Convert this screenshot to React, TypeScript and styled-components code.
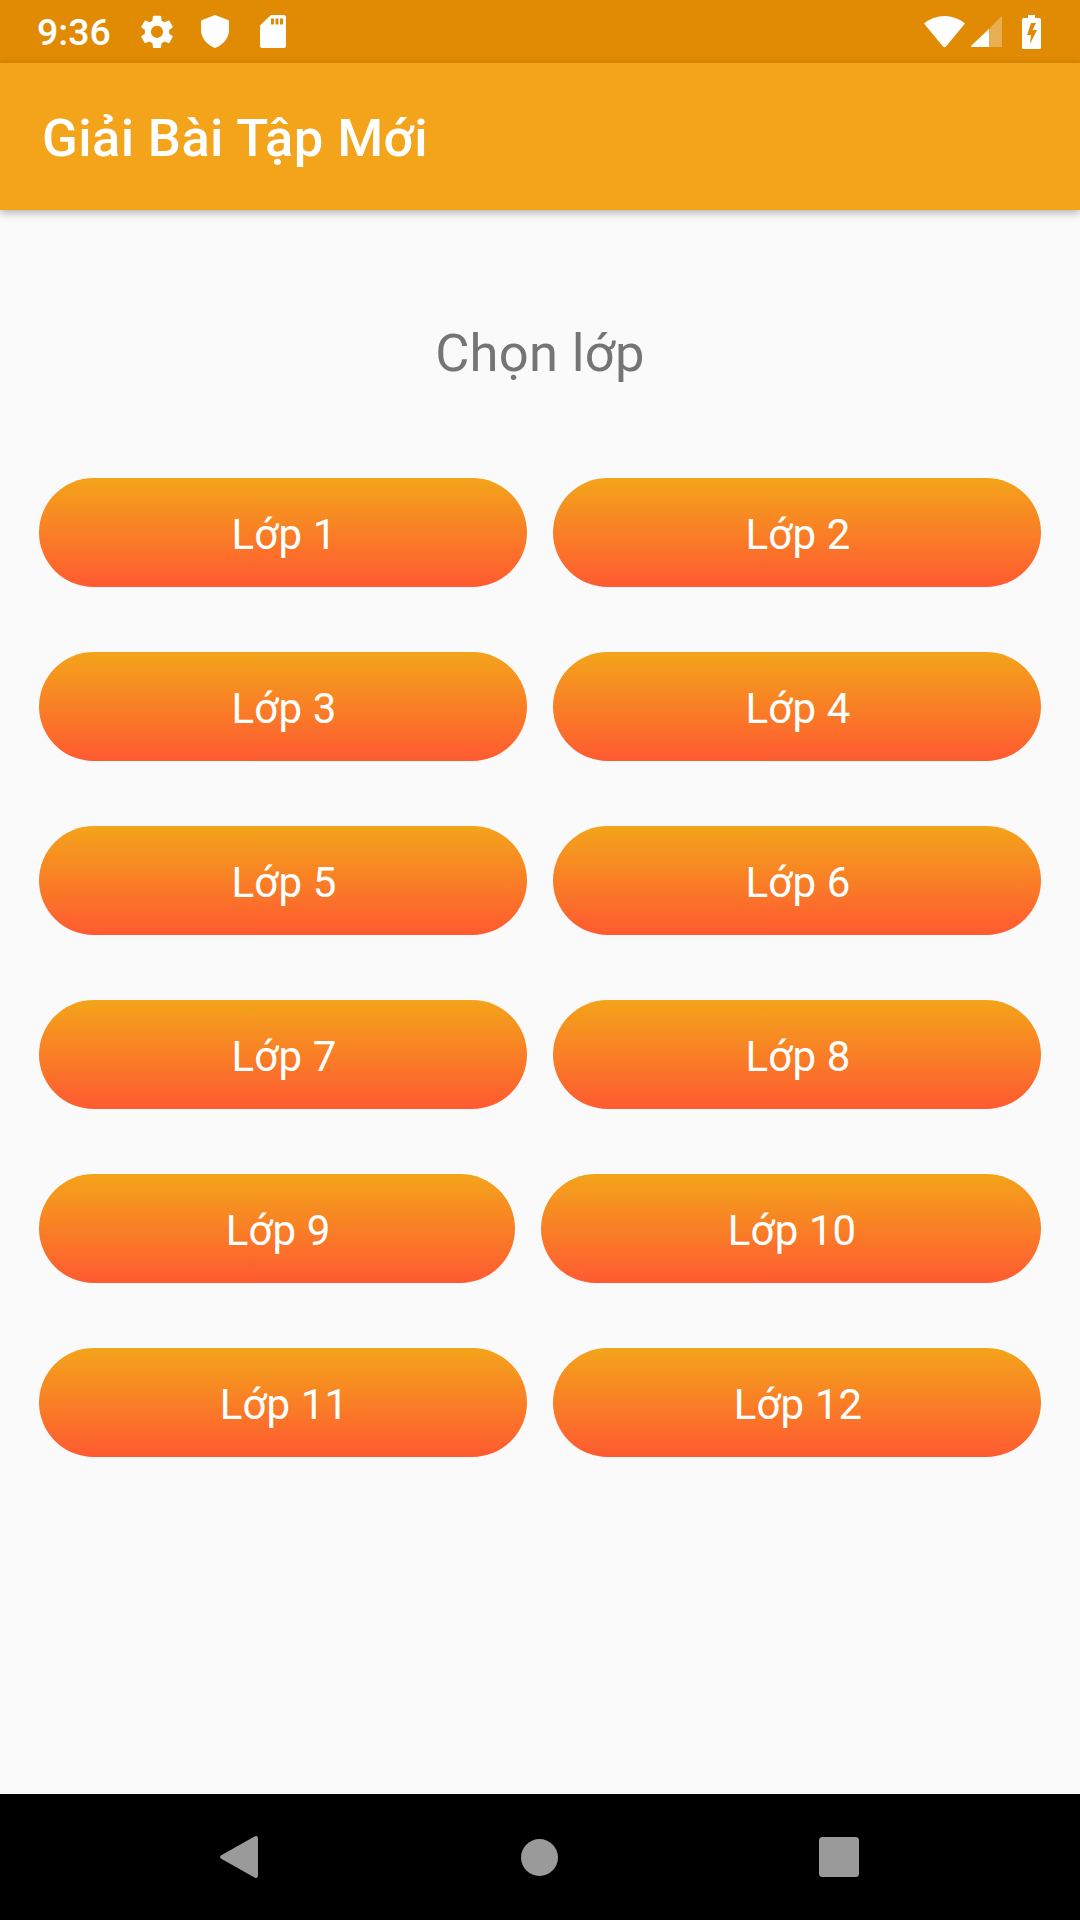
import React from "react";
import styled, { createGlobalStyle } from "styled-components";

const Global = createGlobalStyle`
  html, body { margin: 0; padding: 0; background: #fafafa; }
  * { box-sizing: border-box; }
`;
const Screen = styled.div`
  width: 1080px; height: 1920px; display: flex; flex-direction: column;
  background: #fafafa; font-family: Roboto, "Noto Sans", sans-serif; overflow: hidden;
`;
const StatusBar = styled.div`
  height: 63px; flex: none; background: #e08b03; display: flex; align-items: center;
  padding: 0 39px 0 37px; color: #fff;
`;
const Time = styled.span`
  font-size: 37.5px; line-height: 63px; padding-top: 2px; width: 104px; flex: none; font-weight: 500;
`;
const LeftIcons = styled.div`
  display: flex; align-items: center; gap: 28px; flex: 1;
`;
const RightIcons = styled.div`
  display: flex; align-items: center; gap: 6px;
`;
const Glyph = styled.svg`
  display: block; flex: none;
`;
const ShieldGlyph = styled(Glyph)`
  margin-right: 3px;
`;
const BatteryGlyph = styled(Glyph)`
  margin-left: 14px;
`;
const AppBar = styled.header`
  height: 147px; flex: none; background: #f3a41a; display: flex; align-items: center;
  padding: 2px 0 0 42px; box-shadow: 0 3px 8px rgba(0,0,0,.28); position: relative; z-index: 1;
`;
const Title = styled.h1`
  margin: 0; color: #fff; font-size: 52.5px; font-weight: 500; line-height: 62px; letter-spacing: .4px;
`;
const Main = styled.main`
  flex: 1; display: flex; flex-direction: column; padding: 108px 39px 0;
`;
const Heading = styled.h2`
  margin: 0 0 89px; text-align: center; color: #757575; font-size: 52.5px; font-weight: 400; line-height: 71px; letter-spacing: .3px;
`;
const Rows = styled.div`
  display: flex; flex-direction: column; gap: 65px;
`;
const Row = styled.div`
  display: flex; gap: 26px;
`;
const GradeButton = styled.button`
  flex: 1 1 auto; height: 109px; border: 0; border-radius: 54.5px; padding: 4px 0 0 2px;
  background: linear-gradient(180deg, #f3a41a 0%, #ff5a31 100%);
  color: #fff; font-family: inherit; font-size: 42px; font-weight: 400; line-height: 105px; text-align: center; letter-spacing: .1px;
`;
const NavBar = styled.nav`
  height: 126px; flex: none; background: #000; display: grid; padding-right: 2px;
  grid-template-columns: repeat(3, 300px); justify-content: center; justify-items: center; align-items: center;
`;

const rows = [[1, 2], [3, 4], [5, 6], [7, 8], [9, 10], [11, 12]];

export default function App() {
  return (
    <Screen>
      <Global />
      <StatusBar>
        <Time>9:36</Time>
        <LeftIcons>
          <Glyph width="32" height="33.7" viewBox="2.5 2 19 20" fill="#fff">
            <path d="M19.14 12.94c.04-.3.06-.61.06-.94 0-.32-.02-.64-.07-.94l2.03-1.58c.18-.14.23-.41.12-.61l-1.92-3.32c-.12-.22-.37-.29-.59-.22l-2.39.96c-.5-.38-1.03-.7-1.62-.94l-.36-2.54c-.04-.24-.24-.41-.48-.41h-3.84c-.24 0-.43.17-.47.41l-.36 2.54c-.59.24-1.13.57-1.62.94l-2.39-.96c-.22-.08-.47 0-.59.22L2.74 8.87c-.12.21-.08.47.12.61l2.03 1.58c-.05.3-.09.63-.09.94s.02.64.07.94l-2.03 1.58c-.18.14-.23.41-.12.61l1.92 3.32c.12.22.37.29.59.22l2.39-.96c.5.38 1.03.7 1.62.94l.36 2.54c.05.24.24.41.48.41h3.84c.24 0 .44-.17.47-.41l.36-2.54c.59-.24 1.13-.56 1.62-.94l2.39.96c.22.08.47 0 .59-.22l1.92-3.32c.12-.22.07-.47-.12-.61l-2.01-1.58zM12 15.6c-1.98 0-3.6-1.62-3.6-3.6s1.62-3.6 3.6-3.6 3.6 1.62 3.6 3.6-1.62 3.6-3.6 3.6z" />
          </Glyph>
          <ShieldGlyph width="28" height="33" viewBox="0 0 28 33" fill="#fff">
            <path d="M14 0 L27 5 Q28 5.4 28 6.5 V15 C28 23 22 30 14 33 C6 30 0 23 0 15 V6.5 Q0 5.4 1 5 Z" />
          </ShieldGlyph>
          <Glyph width="26" height="33" viewBox="0 0 26 33" fill="#fff">
            <path fillRule="evenodd" d="M11 0 H23.5 Q26 0 26 2.5 V30.5 Q26 33 23.5 33 H2.5 Q0 33 0 30.5 V10.5 Z M11 3.5 V9.5 H14 V3.5 Z M15.5 3.5 V9.5 H18.5 V3.5 Z M20 3.5 V9.5 H23 V3.5 Z" />
          </Glyph>
        </LeftIcons>
        <RightIcons>
          <Glyph width="41" height="32" viewBox="0 0 41 32" fill="#fff">
            <path d="M20.5 0 C28 0 35 2.8 41 7.5 L22 30.5 Q20.5 32 19 30.5 L0 7.5 C6 2.8 13 0 20.5 0 Z" />
          </Glyph>
          <Glyph width="31" height="31" viewBox="0 0 31 31">
            <path d="M31 1 V31 H18 V13 L29 1.5 Q31 0 31 1 Z" fill="#fff" fillOpacity=".3" />
            <path d="M18 13 V31 H1 Q-.5 31 .5 29.5 Z" fill="#fff" />
          </Glyph>
          <BatteryGlyph width="19" height="34" viewBox="0 0 19 34">
            <path fillRule="evenodd" fill="#fff" d="M6 0 H13 V3 H17.5 Q19 3 19 4.5 V32.5 Q19 34 17.5 34 H1.5 Q0 34 0 32.5 V4.5 Q0 3 1.5 3 H6 Z M9 8 L5 20 H9 L8 29 L15 15 H10.5 L14 8 Z" />
          </BatteryGlyph>
        </RightIcons>
      </StatusBar>
      <AppBar>
        <Title>Giải Bài Tập Mới</Title>
      </AppBar>
      <Main>
        <Heading>Chọn lớp</Heading>
        <Rows>
          {rows.map((r) => (
            <Row key={r[0]}>
              {r.map((n) => (
                <GradeButton key={n}>Lớp {n}</GradeButton>
              ))}
            </Row>
          ))}
        </Rows>
      </Main>
      <NavBar>
        <Glyph width="38" height="42" viewBox="0 0 38 42" fill="#9a9a9a">
          <path d="M0.8 19.5 L34.5 0.6 Q38 -1 38 2.5 V39.5 Q38 43 34.5 41.4 L0.8 22.5 Q-.6 21 .8 19.5 Z" />
        </Glyph>
        <Glyph width="37" height="37" viewBox="0 0 37 37" fill="#9a9a9a">
          <circle cx="18.5" cy="18.5" r="18.5" />
        </Glyph>
        <Glyph width="40" height="40" viewBox="0 0 40 40" fill="#9a9a9a">
          <rect width="40" height="40" rx="3.5" />
        </Glyph>
      </NavBar>
    </Screen>
  );
}
